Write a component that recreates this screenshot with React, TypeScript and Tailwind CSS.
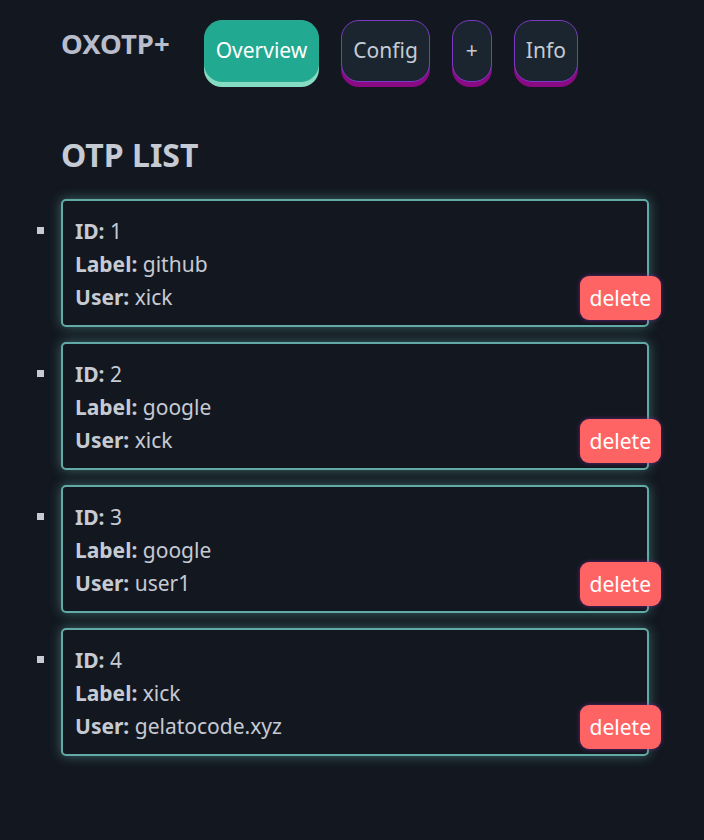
import React from "react";

const items = [
  { id: 1, label: "github", user: "xick" },
  { id: 2, label: "google", user: "xick" },
  { id: 3, label: "google", user: "user1" },
  { id: 4, label: "xick", user: "gelatocode.xyz" },
];

export default function App() {
  return (
    <div
      className="min-h-[840px] w-full bg-[#131820] text-[#c6cad3]"
      style={{ fontFamily: '"Noto Sans", "Open Sans", sans-serif' }}
    >
      <nav className="flex items-start pl-[61px] pt-[20px]">
        <div className="mt-[6px] mr-[34px] text-[27.5px] font-bold leading-[36px] text-[#b9bdcb]">OXOTP+</div>
        <div className="flex gap-[22px]">
          <button className="h-[62px] rounded-[18px] border border-[#2aa98f] bg-[#22a991] px-[11px] text-[21px] text-white shadow-[0_5px_0_#86dcc2]">
            Overview
          </button>
          <button className="h-[62px] rounded-[18px] border border-[#7b3ac4] bg-[#1b2530] px-[11px] text-[21px] text-[#c6cad3] shadow-[0_5px_0_#8a0a83]">
            Config
          </button>
          <button className="h-[62px] w-[40px] rounded-[18px] border border-[#7b3ac4] bg-[#1b2530] text-[21px] text-[#c6cad3] shadow-[0_5px_0_#8a0a83]">
            +
          </button>
          <button className="h-[62px] rounded-[18px] border border-[#7b3ac4] bg-[#1b2530] px-[11px] text-[21px] text-[#c6cad3] shadow-[0_5px_0_#8a0a83]">
            Info
          </button>
        </div>
      </nav>
      <main className="pl-[37px] pr-[55px]">
        <h2 className="mt-[53px] pl-[24px] text-[32px] font-bold leading-[40px] text-[#c6cad3]">OTP LIST</h2>
        <ul className="mt-[24px] flex list-none flex-col gap-[15px]">
          {items.map((it) => (
            <li key={it.id} className="flex items-start gap-[17px]">
              <span className="mt-[28px] h-[7px] w-[7px] shrink-0 bg-[#c6cad3]" />
              <div className="relative h-[128px] flex-1 rounded-[5px] border-2 border-[#62aaa5] bg-[#131820] px-[12px] pt-[14px] text-[21px] leading-[33px] shadow-[0_0_12px_rgba(95,167,162,0.55)]">
                <div><b>ID:</b> {it.id}</div>
                <div><b>Label:</b> {it.label}</div>
                <div><b>User:</b> {it.user}</div>
                <button className="absolute right-[-14px] bottom-[5px] h-[44px] rounded-[9px] bg-[#ff6464] px-[10px] text-[21px] text-white shadow-[0_0_4px_rgba(140,40,160,0.7)]">
                  delete
                </button>
              </div>
            </li>
          ))}
        </ul>
      </main>
    </div>
  );
}
